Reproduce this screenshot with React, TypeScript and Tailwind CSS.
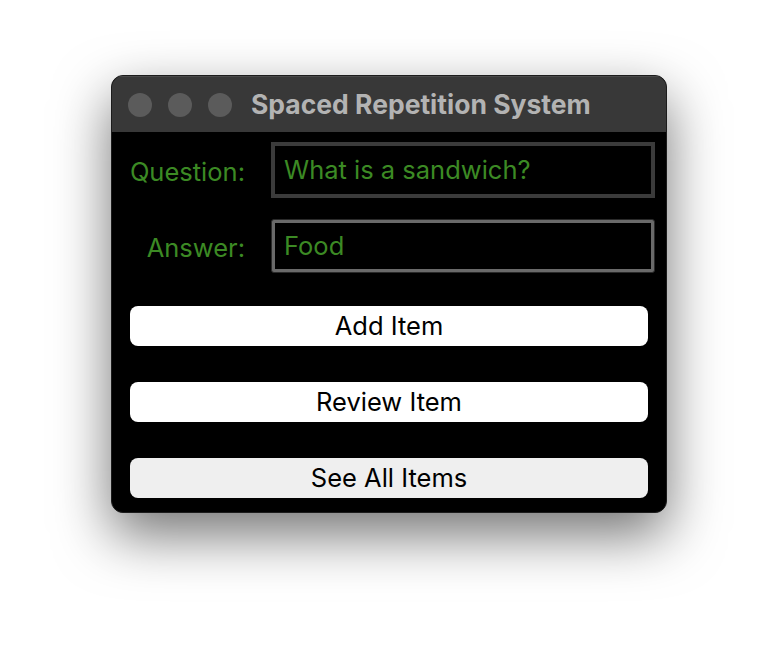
import React, { useState } from 'react';

const App = () => {
  const [question, setQuestion] = useState('What is a sandwich?');
  const [answer, setAnswer] = useState('Food');

  return (
    <div className="min-h-screen w-full bg-white flex justify-center pt-[75px] font-['Inter','Liberation_Sans',sans-serif]">
      {/* window */}
      <div className="w-[556px] h-[438px] rounded-[12px] border border-[#1c1c1c] bg-black overflow-hidden shadow-[0_22px_55px_rgba(0,0,0,0.55)] flex flex-col">
        {/* title bar */}
        <div className="h-[56px] bg-[#383838] border-t border-[#4a4a4a] flex items-center pl-[16px] shrink-0">
          <div className="flex items-center gap-[16px]">
            <div className="w-[24px] h-[24px] rounded-full bg-[#5b5b5b]" />
            <div className="w-[24px] h-[24px] rounded-full bg-[#5b5b5b]" />
            <div className="w-[24px] h-[24px] rounded-full bg-[#5b5b5b]" />
          </div>
          <div className="ml-[19px] text-[26.5px] font-bold text-[#b3b3b3]">
            Spaced Repetition System
          </div>
        </div>

        {/* content */}
        <div className="flex-1 flex flex-col pt-[10px]">
          <div className="grid grid-cols-[118px_384px] gap-x-[26px] gap-y-[21px] pl-[15px]">
            <div className="flex items-center justify-end pt-[5px] text-[25.5px] text-[#3c8a24]">Question:</div>
            <div className="h-[56px] border-[4px] border-[#3b3b3b] bg-black flex items-center px-[9px]">
              <input
                value={question}
                onChange={(e) => setQuestion(e.target.value)}
                className="w-full bg-transparent outline-none text-[25.5px] text-[#3c8a24]"
              />
            </div>
            <div className="flex items-center justify-end pt-[5px] text-[25.5px] text-[#3c8a24]">Answer:</div>
            <div className="h-[54px] rounded-[3px] border border-[#2a2a2a] bg-[#6a6a6a] p-[3px] flex">
              <div className="flex-1 bg-black flex items-center px-[9px]">
                <input
                  value={answer}
                  onChange={(e) => setAnswer(e.target.value)}
                  className="w-full bg-transparent outline-none text-[25.5px] text-[#3c8a24]"
                />
              </div>
            </div>
          </div>

          <div className="flex flex-col px-[18px] mt-[33px] gap-[36px]">
            <button className="h-[40px] rounded-[8px] bg-white text-black text-[25.5px]">Add Item</button>
            <button className="h-[40px] rounded-[8px] bg-white text-black text-[25.5px]">Review Item</button>
            <button className="h-[40px] rounded-[8px] bg-[#efefef] text-black text-[25.5px]">See All Items</button>
          </div>
        </div>
      </div>
    </div>
  );
};

export default App;
